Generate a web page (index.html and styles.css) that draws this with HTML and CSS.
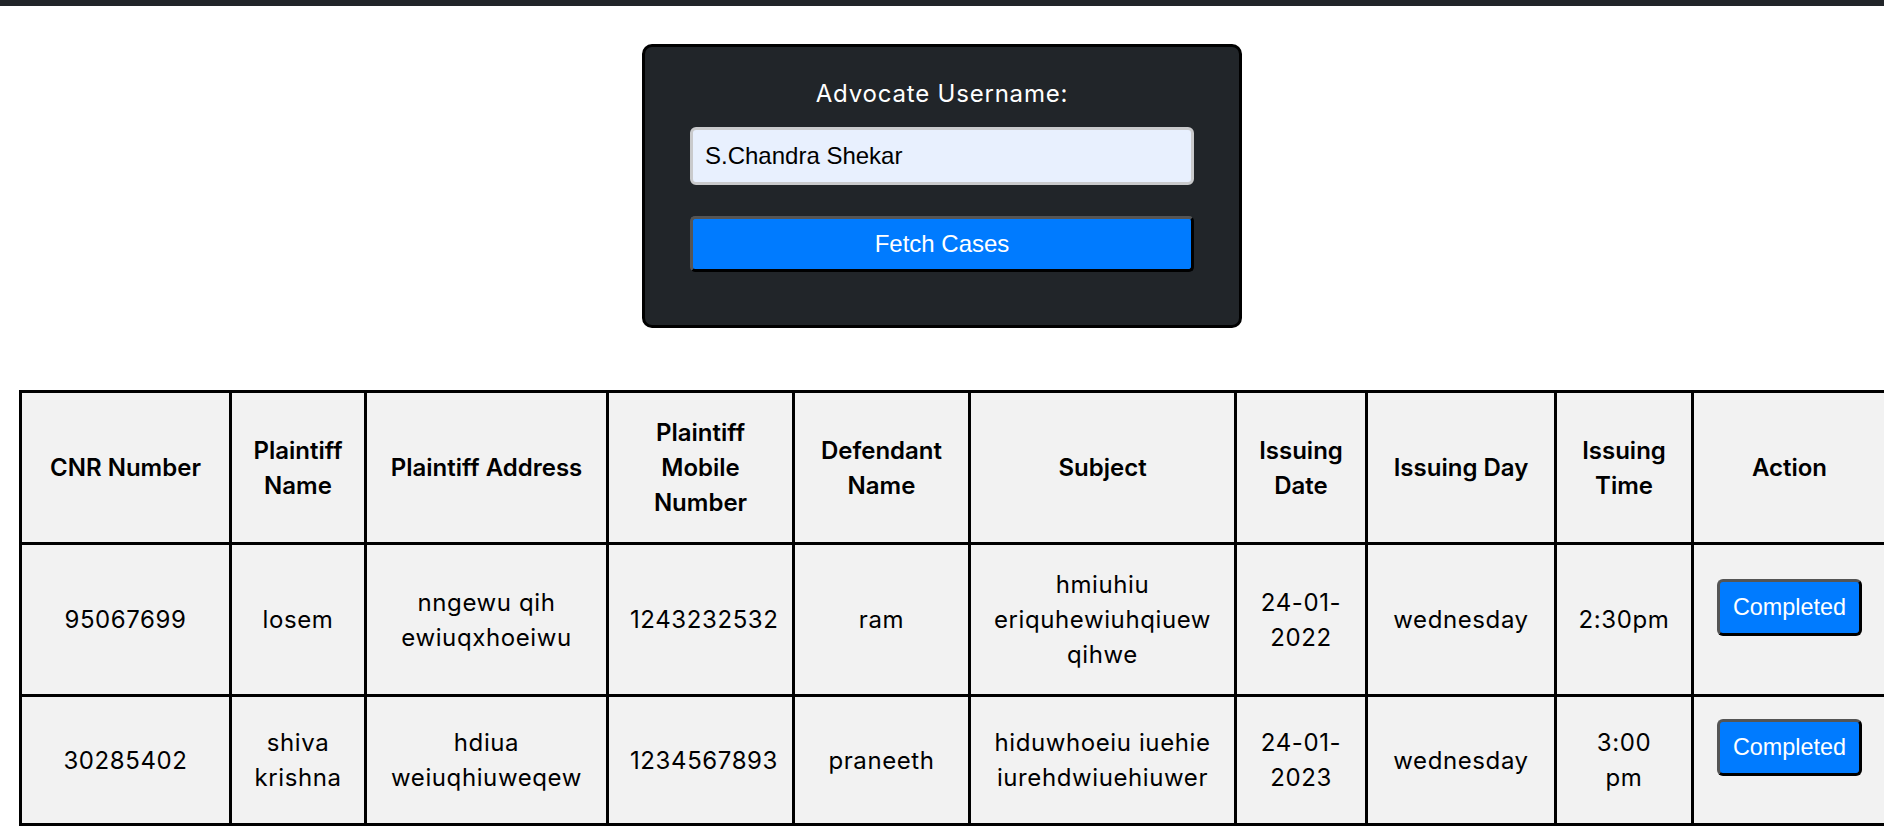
FILE: index.html
```html
<!DOCTYPE html>
<html lang="en">
<head>
<meta charset="utf-8">
<title>Advocate Cases</title>
<link rel="stylesheet" href="styles.css">
</head>
<body>
<div class="topbar"></div>
<main class="page">
  <section class="card">
    <label class="card-label" for="advocate">Advocate Username:</label>
    <input id="advocate" class="card-input" type="text" value="S.Chandra Shekar">
    <button class="card-btn" type="button">Fetch Cases</button>
  </section>

  <table class="cases">
    <colgroup>
      <col class="c-cnr">
      <col class="c-pname">
      <col class="c-paddr">
      <col class="c-pmob">
      <col class="c-dname">
      <col class="c-subj">
      <col class="c-idate">
      <col class="c-iday">
      <col class="c-itime">
      <col class="c-action">
    </colgroup>
    <thead>
      <tr>
        <th>CNR Number</th>
        <th>Plaintiff Name</th>
        <th>Plaintiff Address</th>
        <th>Plaintiff Mobile Number</th>
        <th>Defendant Name</th>
        <th>Subject</th>
        <th>Issuing Date</th>
        <th>Issuing Day</th>
        <th>Issuing Time</th>
        <th>Action</th>
      </tr>
    </thead>
    <tbody>
      <tr>
        <td>95067699</td>
        <td>losem</td>
        <td>nngewu qih ewiuqxhoeiwu</td>
        <td>1243232532</td>
        <td>ram</td>
        <td>hmiuhiu eriquhewiuhqiuew qihwe</td>
        <td>24-01-2022</td>
        <td>wednesday</td>
        <td>2:30pm</td>
        <td><button class="done-btn" type="button">Completed</button></td>
      </tr>
      <tr class="row-last">
        <td>30285402</td>
        <td>shiva krishna</td>
        <td>hdiua weiuqhiuweqew</td>
        <td>1234567893</td>
        <td>praneeth</td>
        <td>hiduwhoeiu iuehie iurehdwiuehiuwer</td>
        <td>24-01-2023</td>
        <td>wednesday</td>
        <td>3:00 pm</td>
        <td><button class="done-btn" type="button">Completed</button></td>
      </tr>
    </tbody>
  </table>
</main>
</body>
</html>
```

FILE: styles.css
```css
html, body {
  overflow: hidden;
}

body {
  margin: 0;
  background: #ffffff;
  font-family: Inter, "Noto Sans", "DejaVu Sans", sans-serif;
  color: #000000;
}

.topbar {
  height: 6px;
  background: #212529;
}

.page {
  display: flex;
  flex-direction: column;
  align-items: flex-start;
}

.card {
  align-self: center;
  box-sizing: border-box;
  width: 600px;
  height: 284px;
  margin-top: 38px;
  padding: 29px 45px 0;
  background: #212529;
  border: 3px solid #000000;
  border-radius: 10px;
  display: flex;
  flex-direction: column;
}

.card-label {
  display: block;
  text-align: center;
  color: #ffffff;
  font-family: Inter, "Noto Sans", sans-serif;
  font-size: 24px;
  font-weight: 400;
  line-height: 36px;
  letter-spacing: 0.8px;
  margin-bottom: 15px;
}

.card-input {
  box-sizing: border-box;
  width: 100%;
  height: 58px;
  margin: 0 0 31px;
  padding: 0 12px;
  background: #e8f0fe;
  border: 3px solid #c9cacc;
  border-radius: 6px;
  font-family: "Liberation Sans", Arial, sans-serif;
  font-size: 24px;
  color: #000000;
  outline: none;
}

.card-btn {
  box-sizing: border-box;
  width: 100%;
  height: 56px;
  margin: 0;
  padding: 0;
  background: #007bff;
  border-width: 3px;
  border-style: solid;
  border-color: #555555 #000000 #000000 #555555;
  border-radius: 5px;
  color: #ffffff;
  font-family: "Liberation Sans", Arial, sans-serif;
  font-size: 24px;
}

.cases {
  margin: 62px 0 0 19px;
  table-layout: fixed;
  width: 1869px;
  border-collapse: separate;
  border-spacing: 0;
  border-left: 3px solid #000000;
  border-top: 3px solid #000000;
  flex: none;
}

.c-cnr { width: 210px; }
.c-pname { width: 135px; }
.c-paddr { width: 242px; }
.c-pmob { width: 186px; }
.c-dname { width: 176px; }
.c-subj { width: 266px; }
.c-idate { width: 131px; }
.c-iday { width: 189px; }
.c-itime { width: 137px; }
.c-action { width: 194px; }

.cases th,
.cases td {
  background: #f2f2f2;
  border-right: 3px solid #000000;
  border-bottom: 3px solid #000000;
  padding: 22px 21px;
  text-align: center;
  vertical-align: middle;
  font-size: 24px;
  line-height: 35px;
  color: #000000;
}

.cases th {
  font-weight: 600;
}

.cases td {
  font-weight: 400;
  letter-spacing: 0.6px;
}

.cases .row-last {
  height: 129px;
}

.done-btn {
  margin: 0 0 25px;
  padding: 12px 13px;
  background: #007bff;
  border-width: 3px;
  border-style: solid;
  border-color: #555555 #000000 #000000 #555555;
  border-radius: 6px;
  color: #ffffff;
  font-family: "Liberation Sans", Arial, sans-serif;
  font-size: 23.4px;
  letter-spacing: 0;
  line-height: normal;
  vertical-align: middle;
}
```
